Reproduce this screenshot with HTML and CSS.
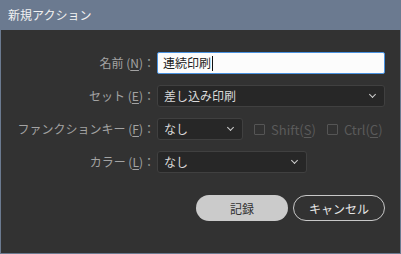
FILE: index.html
```html
<!DOCTYPE html>
<html lang="ja">
<head>
    <meta charset="UTF-8">
    <title>新規アクション</title>
    <link rel="stylesheet" href="styles.css">
</head>
<body>
    <div class="dialog">
        <div class="titlebar">新規アクション</div>

        <div class="form">
            <label class="label">名前 (<u>N</u>)：</label>
            <div class="field">
                <div class="text-input">連続印刷<span class="caret"></span></div>
            </div>

            <label class="label">セット (<u>E</u>)：</label>
            <div class="field">
                <div class="select wide">差し込み印刷<span class="chevron"></span></div>
            </div>

            <label class="label">ファンクションキー (<u>F</u>)：</label>
            <div class="field">
                <div class="select short">なし<span class="chevron"></span></div>
                <span class="check disabled"><span class="box"></span>Shift(<u>S</u>)</span>
                <span class="check disabled"><span class="box"></span>Ctrl(<u>C</u>)</span>
            </div>

            <label class="label">カラー (<u>L</u>)：</label>
            <div class="field">
                <div class="select medium">なし<span class="chevron"></span></div>
            </div>
        </div>

        <div class="button-group">
            <button class="primary">記録</button>
            <button class="outline">キャンセル</button>
        </div>
    </div>
</body>
</html>
```

FILE: styles.css
```css
body {
    margin: 0;
    background: #323232;
    font-family: "Noto Sans CJK JP", "Noto Sans", sans-serif;
    font-size: 12px;
}

.dialog {
    width: 401px;
    height: 254px;
    box-sizing: border-box;
    border: 1px solid #6b7a90;
    border-top: none;
    background: #323232;
}

.titlebar {
    height: 30px;
    line-height: 30px;
    background: #6b7a90;
    color: #f2f2f2;
    padding-left: 8px;
    margin: 0 -1px;
}

.form {
    display: grid;
    grid-template-columns: 154px 1fr;
    column-gap: 2px;
    row-gap: 11px;
    padding: 22px 15px 0 0;
}

.label {
    color: #a3a3a3;
    text-align: right;
    line-height: 22px;
    white-space: nowrap;
}

.label u, .check u {
    text-underline-offset: 2px;
}

.field {
    display: flex;
    align-items: center;
    height: 22px;
}

.text-input {
    flex: 1;
    height: 22px;
    box-sizing: border-box;
    border: 1px solid #4a92e0;
    border-radius: 2px;
    background: #fcfcfc;
    color: #222;
    padding-left: 5px;
    line-height: 20px;
    display: flex;
    align-items: center;
}

.caret {
    display: inline-block;
    width: 1px;
    height: 15px;
    background: #111;
    margin-left: 1px;
}

.select {
    position: relative;
    height: 22px;
    box-sizing: border-box;
    border: 1px solid #404040;
    border-radius: 3px;
    background: #272727;
    color: #dadada;
    padding-left: 6px;
    line-height: 20px;
}

.select.wide {
    flex: 1;
}

.select.short {
    width: 86px;
}

.select.medium {
    width: 150px;
}

.chevron {
    position: absolute;
    right: 9px;
    top: 6px;
    width: 4px;
    height: 4px;
    border-right: 1.5px solid #cfcfcf;
    border-bottom: 1.5px solid #cfcfcf;
    transform: rotate(45deg);
}

.check {
    display: flex;
    align-items: center;
    margin-left: 11px;
    color: #5a5a5a;
    font-size: 13px;
    white-space: nowrap;
}

.check + .check {
    margin-left: 11px;
}

.check .box {
    width: 9px;
    height: 9px;
    border: 1px solid #555;
    border-radius: 1px;
    margin-right: 6px;
}

.button-group {
    display: flex;
    justify-content: flex-end;
    gap: 5px;
    padding: 22px 15px 0 0;
}

button {
    height: 26px;
    border-radius: 13px;
    font-family: inherit;
    font-size: 12px;
    padding: 0;
    cursor: pointer;
}

button.primary {
    width: 92px;
    background: #cbcbcb;
    border: none;
    color: #333;
}

button.outline {
    width: 92px;
    background: transparent;
    border: 1px solid #c8c8c8;
    color: #e6e6e6;
}
```
